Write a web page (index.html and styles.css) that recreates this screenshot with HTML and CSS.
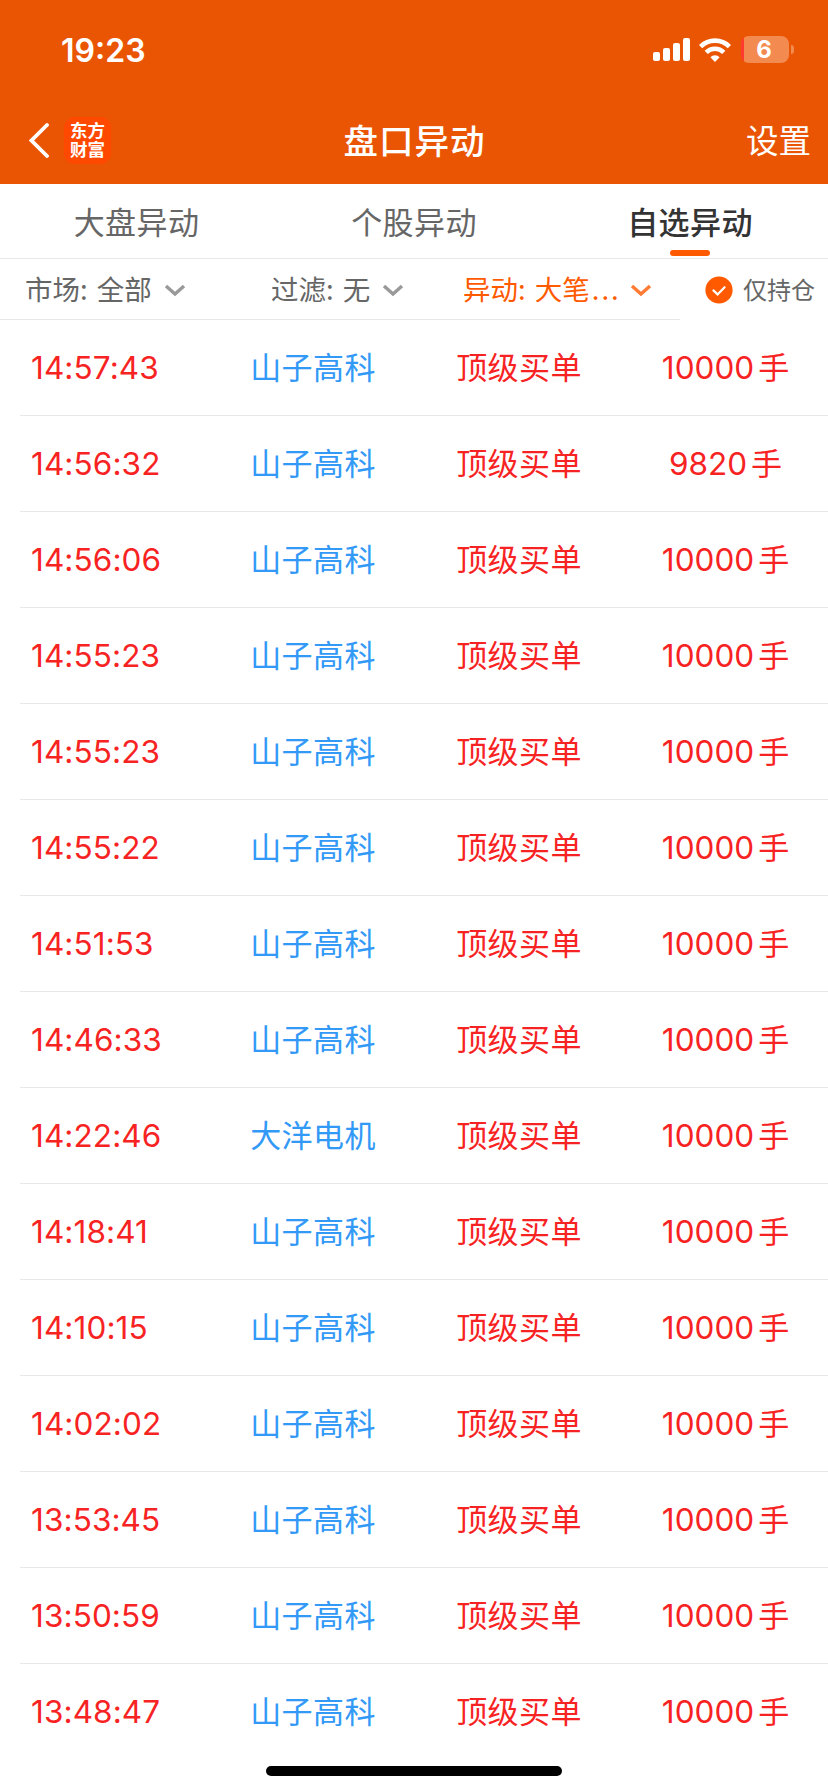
FILE: index.html
```html
<!DOCTYPE html>
<html lang="zh-CN">
<head>
    <meta charset="UTF-8">
    <meta name="viewport" content="width=device-width, initial-scale=1.0">
    <title>盘口异动</title>
    <link rel="stylesheet" href="styles.css">
</head>
<body>
    <header class="header">
        <div class="status-bar">
            <span class="clock">19:23</span>
            <div class="status-icons">
                <svg class="signal" width="37" height="24" viewBox="0 0 37 24" fill="#fff">
                    <rect x="0" y="14" width="7" height="9" rx="2"/>
                    <rect x="10" y="10" width="7" height="13" rx="2"/>
                    <rect x="20" y="5" width="7" height="18" rx="2"/>
                    <rect x="30" y="0" width="7" height="23" rx="2"/>
                </svg>
                <svg class="wifi" width="32" height="24" viewBox="0 0 32 24">
                    <g fill="none" stroke="#fff" stroke-width="4.6">
                        <path d="M1.6 8.6a20.4 20.4 0 0 1 28.8 0"/>
                        <path d="M7.2 14.4a12.5 12.5 0 0 1 17.6 0"/>
                    </g>
                    <path d="M16 24l-4.6-4.8a6.6 6.6 0 0 1 9.2 0z" fill="#fff"/>
                </svg>
                <div class="battery"><span class="battery-level">6</span></div>
                <div class="battery-cap"></div>
            </div>
        </div>
        <nav class="nav-bar">
            <div class="nav-left">
                <svg class="back" width="20" height="35" viewBox="0 0 20 35">
                    <path d="M18 2L2.5 17.5L18 33" fill="none" stroke="#fff" stroke-width="3.8" stroke-linecap="round"/>
                </svg>
                <div class="logo">东方<br>财富</div>
            </div>
            <h1 class="title">盘口异动</h1>
            <span class="settings">设置</span>
        </nav>
    </header>

    <div class="tabs">
        <div class="tab">大盘异动</div>
        <div class="tab">个股异动</div>
        <div class="tab active">自选异动</div>
    </div>

    <div class="filters">
        <div class="filter-list">
            <div class="filter filter-market">
                <span>市场: 全部</span>
                <svg class="arrow" width="22" height="14" viewBox="0 0 22 14"><path d="M2 3l9 8 9-8"/></svg>
            </div>
            <div class="filter filter-rule">
                <span>过滤: 无</span>
                <svg class="arrow" width="22" height="14" viewBox="0 0 22 14"><path d="M2 3l9 8 9-8"/></svg>
            </div>
            <div class="filter filter-type active">
                <span>异动: 大笔<b class="dots">...</b></span>
                <svg class="arrow" width="22" height="14" viewBox="0 0 22 14"><path d="M2 3l9 8 9-8"/></svg>
            </div>
        </div>
        <div class="only-hold">
            <svg width="28" height="28" viewBox="0 0 28 28">
                <circle cx="14" cy="14" r="13.6" fill="#ff5a00"/>
                <path d="M8.4 14.4l4.2 4 7-7.2" fill="none" stroke="#fff" stroke-width="2.2" stroke-linecap="round"/>
            </svg>
            <span>仅持仓</span>
        </div>
    </div>

    <ul class="list">
        <li><span class="time">14:57:43</span><span class="name">山子高科</span><span class="type">顶级买单</span><span class="amount">10000<i>手</i></span></li>
        <li><span class="time">14:56:32</span><span class="name">山子高科</span><span class="type">顶级买单</span><span class="amount">9820<i>手</i></span></li>
        <li><span class="time">14:56:06</span><span class="name">山子高科</span><span class="type">顶级买单</span><span class="amount">10000<i>手</i></span></li>
        <li><span class="time">14:55:23</span><span class="name">山子高科</span><span class="type">顶级买单</span><span class="amount">10000<i>手</i></span></li>
        <li><span class="time">14:55:23</span><span class="name">山子高科</span><span class="type">顶级买单</span><span class="amount">10000<i>手</i></span></li>
        <li><span class="time">14:55:22</span><span class="name">山子高科</span><span class="type">顶级买单</span><span class="amount">10000<i>手</i></span></li>
        <li><span class="time">14:51:53</span><span class="name">山子高科</span><span class="type">顶级买单</span><span class="amount">10000<i>手</i></span></li>
        <li><span class="time">14:46:33</span><span class="name">山子高科</span><span class="type">顶级买单</span><span class="amount">10000<i>手</i></span></li>
        <li><span class="time">14:22:46</span><span class="name">大洋电机</span><span class="type">顶级买单</span><span class="amount">10000<i>手</i></span></li>
        <li><span class="time">14:18:41</span><span class="name">山子高科</span><span class="type">顶级买单</span><span class="amount">10000<i>手</i></span></li>
        <li><span class="time">14:10:15</span><span class="name">山子高科</span><span class="type">顶级买单</span><span class="amount">10000<i>手</i></span></li>
        <li><span class="time">14:02:02</span><span class="name">山子高科</span><span class="type">顶级买单</span><span class="amount">10000<i>手</i></span></li>
        <li><span class="time">13:53:45</span><span class="name">山子高科</span><span class="type">顶级买单</span><span class="amount">10000<i>手</i></span></li>
        <li><span class="time">13:50:59</span><span class="name">山子高科</span><span class="type">顶级买单</span><span class="amount">10000<i>手</i></span></li>
        <li><span class="time">13:48:47</span><span class="name">山子高科</span><span class="type">顶级买单</span><span class="amount">10000<i>手</i></span></li>
    </ul>

    <div class="home-indicator"></div>
</body>
</html>
```
FILE: styles.css
```css
* {
    box-sizing: border-box;
}

body {
    margin: 0;
    width: 828px;
    height: 1792px;
    overflow: hidden;
    background: #fff;
    color: #666;
    font-family: "Noto Sans CJK SC", sans-serif;
}

svg {
    display: block;
    flex: none;
}

/* header */
.header {
    height: 184px;
    background: #ea5504;
    color: #fff;
}

.status-bar {
    height: 98px;
    padding: 0 34px 0 61px;
    display: flex;
    align-items: center;
    justify-content: space-between;
}

.clock {
    padding-top: 3px;
    font-family: Inter, sans-serif;
    font-size: 32px;
    font-weight: 600;
    line-height: 40px;
}

.status-icons {
    display: flex;
    align-items: center;
}

.signal {
    margin-top: 2px;
    margin-right: 9px;
}

.wifi {
    margin-top: 1px;
    margin-right: 10px;
}

.battery {
    width: 48px;
    height: 27px;
    border-radius: 8px;
    background: linear-gradient(to right, #ff3b30 3px, #f38b50 3px);
    text-align: center;
}

.battery-level {
    display: block;
    padding-right: 2px;
    font-family: Inter, sans-serif;
    font-size: 24px;
    font-weight: 700;
    line-height: 27px;
}

.battery-cap {
    width: 3px;
    height: 9px;
    margin-left: 2px;
    border-radius: 0 3px 3px 0;
    background: #f38b50;
}

.nav-bar {
    height: 84px;
    padding: 0 17px 0 18px;
    display: grid;
    grid-template-columns: 1fr auto 1fr;
    align-items: center;
}

.nav-left {
    padding-left: 11px;
    display: flex;
    align-items: center;
    gap: 15px;
}

.back {
    margin-top: 1px;
}

.logo {
    width: 47px;
    height: 47px;
    padding-top: 3px;
    border-radius: 11px;
    background: #ff4800;
    font-size: 17.5px;
    font-weight: 700;
    line-height: 19.5px;
    text-align: center;
}

.title {
    margin: 0;
    padding-bottom: 3px;
    font-size: 34.5px;
    font-weight: 500;
    letter-spacing: 1px;
    line-height: 50px;
}

.settings {
    justify-self: end;
    padding-bottom: 3px;
    font-size: 32.5px;
    line-height: 50px;
}

/* tabs */
.tabs {
    height: 75px;
    display: flex;
    border-bottom: 1px solid #e8e8e8;
}

.tab {
    width: 276px;
    padding-top: 10px;
    display: flex;
    flex-direction: column;
    align-items: center;
    font-size: 31px;
    letter-spacing: 0.4px;
    line-height: 53px;
}

.tab:first-child {
    padding-right: 3px;
}

.tab.active {
    color: #333;
    font-weight: 500;
}

.tab.active::after {
    content: "";
    width: 40px;
    height: 6px;
    margin-top: 3px;
    border-radius: 3px;
    background: #ff5a00;
}

/* filters */
.filters {
    height: 61px;
    display: flex;
    justify-content: space-between;
}

.filter-list {
    width: 680px;
    padding-left: 25px;
    display: flex;
    border-bottom: 1px solid #e8e8e8;
}

.filter {
    display: flex;
    align-items: center;
    gap: 12px;
    font-size: 27.5px;
    word-spacing: 3px;
    white-space: nowrap;
}

.filter span {
    padding-bottom: 2px;
}

.filter-market {
    width: 246px;
}

.filter-rule {
    width: 192px;
}

.filter.active {
    gap: 9px;
    color: #ff5a00;
}

.arrow {
    margin-top: 2px;
    fill: none;
    stroke: #999;
    stroke-width: 3.4;
}

.filter.active .arrow {
    stroke: #ff7a33;
}

.dots {
    margin-left: 2px;
    font-weight: normal;
    letter-spacing: 2px;
}

.only-hold {
    padding-right: 13px;
    display: flex;
    align-items: center;
    gap: 10px;
    font-size: 24px;
}

.only-hold span {
    padding-bottom: 2px;
}

/* list */
.list {
    margin: 0;
    padding: 0 0 0 20px;
    list-style: none;
    font-size: 31px;
    color: #f72323;
}

.list li {
    height: 96px;
    display: grid;
    grid-template-columns: 190px 206px 206px 207px;
    align-items: center;
    border-bottom: 1px solid #e8e8e8;
    letter-spacing: 0.4px;
    text-align: center;
}

.list li:last-child {
    border-color: transparent;
}

.list .time {
    padding-left: 11px;
    font-family: Inter, sans-serif;
    font-size: 31.5px;
    letter-spacing: 0.1px;
    text-align: left;
}

.name,
.type {
    padding-bottom: 4px;
}

.name {
    color: #3399f7;
}

.amount {
    padding-bottom: 5px;
    font-family: Inter, "Noto Sans CJK SC", sans-serif;
    font-size: 31.5px;
    letter-spacing: 0;
}

.amount i {
    margin-left: 4px;
    font-size: 31px;
    font-style: normal;
}

.home-indicator {
    width: 296px;
    height: 10px;
    margin: 6px auto 0;
    border-radius: 5px;
    background: #000;
}
```
